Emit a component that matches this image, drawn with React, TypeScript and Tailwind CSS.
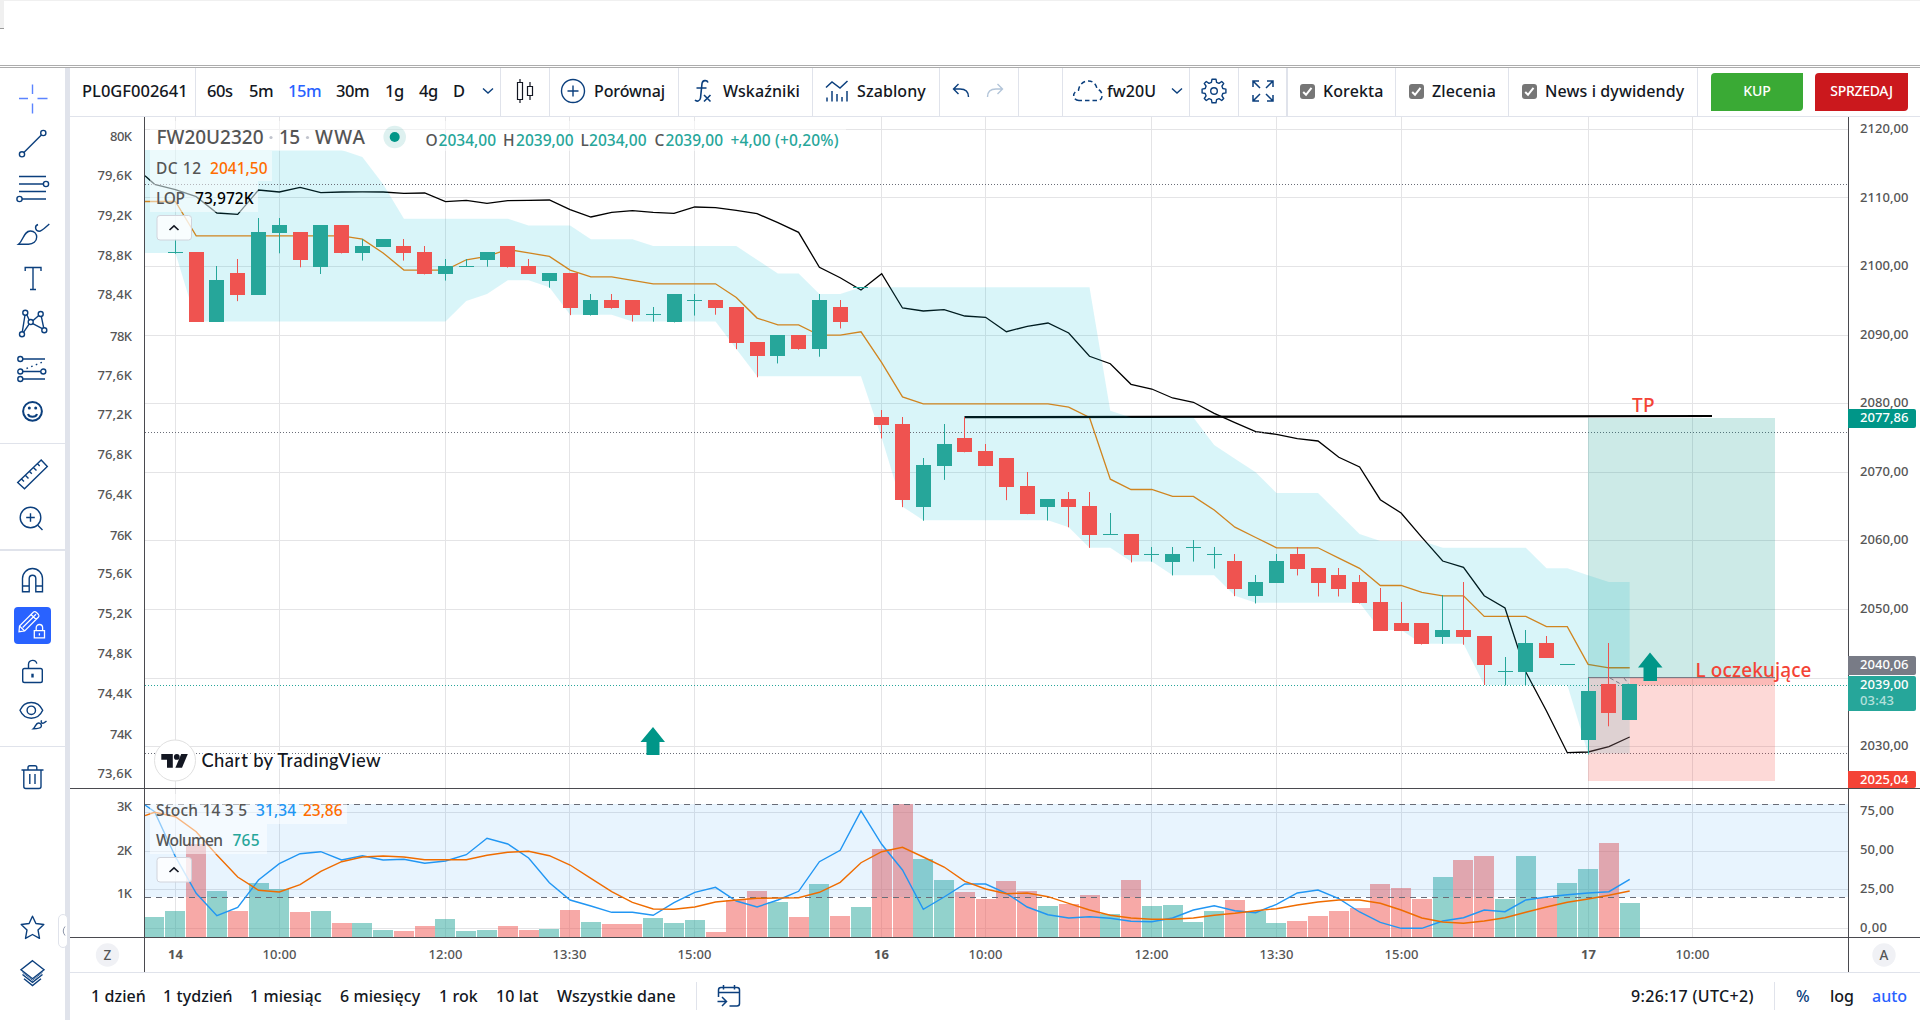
import type { ReactNode } from 'react';

type Candle = [open: number, close: number, high: number, low: number];

const UP = '#26a69a';
const DOWN = '#ef5350';

// One entry per 15 minute bar: open, close, high, low
const candles: Candle[] = [
  [2102, 2102, 2104, 2102], [2102, 2092, 2102, 2092], [2092, 2098, 2100, 2092], [2099, 2096, 2101, 2095],
  [2096, 2105, 2107, 2096], [2105, 2106, 2107, 2102], [2105, 2101, 2105, 2100], [2100, 2106, 2106, 2099],
  [2106, 2102, 2106, 2102], [2102, 2103, 2104, 2101], [2103, 2104, 2104, 2103], [2103, 2102, 2104, 2101],
  [2102, 2099, 2103, 2099], [2099, 2100, 2101, 2098], [2100, 2100, 2101, 2100], [2101, 2102, 2102, 2100],
  [2103, 2100, 2103, 2100], [2100, 2099, 2101, 2099], [2098, 2099, 2099, 2097], [2099, 2094, 2099, 2093],
  [2093, 2095, 2096, 2093], [2095, 2094, 2096, 2094], [2095, 2093, 2095, 2092], [2093, 2093, 2094, 2092],
  [2092, 2096, 2096, 2092], [2095, 2095, 2096, 2093], [2095, 2094, 2095, 2093], [2094, 2089, 2094, 2088],
  [2089, 2087, 2089, 2084], [2087, 2090, 2090, 2086], [2090, 2088, 2090, 2088], [2088, 2095, 2096, 2087],
  [2094, 2092, 2095, 2091], [2097, 2097, 2097, 2097], [2078, 2077, 2079, 2075], [2077, 2066, 2078, 2065],
  [2065, 2071, 2072, 2063], [2071, 2074, 2077, 2069], [2075, 2073, 2078, 2073], [2073, 2071, 2074, 2071],
  [2072, 2068, 2072, 2066], [2068, 2064, 2070, 2064], [2065, 2066, 2066, 2063], [2066, 2065, 2067, 2062],
  [2065, 2061, 2067, 2059], [2061, 2061, 2064, 2061], [2061, 2058, 2061, 2057], [2058, 2058, 2059, 2057],
  [2057, 2058, 2059, 2055], [2059, 2059, 2060, 2057], [2058, 2058, 2059, 2056], [2057, 2053, 2058, 2052],
  [2052, 2054, 2055, 2051], [2054, 2057, 2058, 2054], [2058, 2056, 2059, 2055], [2056, 2054, 2056, 2052],
  [2055, 2053, 2056, 2052], [2054, 2051, 2055, 2051], [2051, 2047, 2053, 2047], [2048, 2047, 2051, 2047],
  [2048, 2045, 2048, 2045], [2046, 2047, 2052, 2045], [2047, 2046, 2054, 2045], [2046, 2042, 2046, 2039],
  [2041, 2041, 2043, 2039], [2041, 2045, 2047, 2039], [2045, 2043, 2046, 2043], [2042, 2042, 2042, 2042],
  [2031, 2038, 2040, 2029], [2039, 2035, 2045, 2033], [2034, 2039, 2039, 2034],
];

// Donchian channel, starting one bar before the first candle
const dcUpper = [
  2117, 2117, 2117, 2117, 2117, 2117, 2117, 2117, 2117, 2117, 2116, 2112, 2107, 2107, 2107, 2107, 2107, 2107,
  2106, 2106, 2106, 2104, 2104, 2104, 2103, 2103, 2103, 2103, 2103, 2101, 2099, 2099, 2096, 2096,
  2097, 2097, 2097, 2097, 2097, 2097, 2097, 2097, 2097, 2097, 2097, 2097, 2079, 2078, 2078, 2078, 2078,
  2074, 2072, 2070, 2067, 2067, 2067, 2064, 2061, 2060, 2060, 2060, 2059, 2059, 2059, 2059, 2059,
  2056, 2056, 2055, 2054, 2054,
];
const dcLower = [
  2102, 2102, 2092, 2092, 2092, 2092, 2092, 2092, 2092, 2092, 2092, 2092, 2092, 2092, 2092, 2095, 2096, 2098,
  2098, 2097, 2093, 2093, 2093, 2092, 2092, 2092, 2092, 2092, 2088, 2084, 2084, 2084, 2084, 2084,
  2084, 2075, 2065, 2063, 2063, 2063, 2063, 2063, 2063, 2063, 2062, 2059, 2059, 2057, 2057, 2055, 2055,
  2055, 2052, 2051, 2051, 2051, 2051, 2051, 2051, 2047, 2047, 2045, 2045, 2045, 2039, 2039, 2039,
  2039, 2039, 2029, 2029, 2029,
];

// Open interest line, pixel rows per bar
const lop = [
  184.3, 189.7, 196.7, 213, 214.3, 190, 192, 187.3, 192.7, 192, 191.8, 192, 193.3, 193, 201.7, 200.3, 203.3,
  200.7, 200.3, 200, 209.7, 217, 212.3, 210.7, 212.3, 213.3, 207, 207.7, 210.3, 213.7, 222.7, 232.3,
  267.3, 277.7, 290, 273.7, 308, 311, 309.7, 316, 317.3, 331.7, 326.3, 323, 333, 356.3, 363.7, 384.3,
  389, 398, 402.3, 413.3, 422.7, 431.7, 434.3, 438.7, 441, 457.3, 467, 499.7, 513, 537.3, 561, 567.3,
  595.7, 608, 672, 711, 752.7, 752, 746.7, 737,
];

const stochK = [
  811.7, 856.7, 893.3, 915.7, 907.3, 880, 863.7, 853.7, 851.7, 860, 855.7, 860, 859.3, 863.3, 861, 854.7,
  838.3, 844, 858, 882.7, 900, 906, 912.3, 912.3, 915.3, 902.7, 892.3, 887.3, 901, 907, 900, 891.3, 861.7,
  850.3, 811, 844.3, 870, 909.3, 897, 884, 884, 893.3, 907, 914.7, 918, 916.7, 918.3, 921.3, 921.7, 918,
  910, 905.7, 910.7, 912.7, 904.3, 893, 890, 898.7, 912, 922.3, 928.3, 928.3, 921, 917.7, 910, 911.7, 900,
  897, 894.7, 893, 891.7, 879.3,
];
const stochD = [
  812.3, 816.7, 831.7, 855, 877, 890.3, 892, 884.7, 871.3, 861.7, 857, 856, 857, 859.7, 859.7, 859.7, 855.3,
  852.3, 851.3, 855.7, 865, 878.3, 891.7, 902.3, 909, 909.3, 907, 902, 900, 898.3, 898, 897.7, 892.3,
  882.3, 862.7, 851.7, 847.3, 857, 867, 881.3, 889, 893.7, 893, 896.7, 903.3, 910, 915.3, 918, 919.3,
  919.3, 918, 915.3, 913.3, 910.7, 908.7, 905, 902, 900, 900, 903.3, 910, 918, 922, 923.3, 921, 917.7,
  912.3, 907, 902.3, 899, 895.3, 891,
];

// Top edge of each volume bar, starting one bar before the first candle
const volume = [
  917, 911, 844, 891, 911, 883, 889, 912, 911, 923, 923, 930, 931, 926, 919, 931, 930, 926, 930, 929, 910,
  922, 924, 924, 918, 923, 920, 932, 900, 891, 902, 917, 884, 916, 907, 849, 804, 859, 880, 892, 899, 881,
  891, 906, 904, 895, 914, 880, 906, 905, 922, 911, 900, 911, 923, 921, 916, 911, 908, 884, 888, 899, 877,
  860, 856, 899, 856, 898, 883, 869, 843, 903,
];

const barX = (i: number) => 175.4 + i * 20.775;
const priceY = (p: number) => 129.5 + (2120 - p) * 6.857;
const barColor = (candle?: Candle) => (candle && candle[1] < candle[0] ? DOWN : UP);

const linePath = (rows: number[], startY: number) =>
  `M145 ${startY}` + rows.map((y, i) => `L${barX(i - 1).toFixed(1)} ${y}`).join('');

const channelPath =
  'M145 ' + priceY(2117) +
  dcUpper.map((p, i) => `L${barX(i - 1)} ${priceY(p)}`).join('') +
  [...dcLower].reverse().map((p, i) => `L${barX(dcLower.length - 2 - i)} ${priceY(p)}`).join('') +
  `L145 ${priceY(2102)}Z`;

const basis = dcUpper.map((p, i) => priceY((p + dcLower[i]) / 2));

const leftLabels: [string, number][] = [
  ['80K', 141], ['79,6K', 179.5], ['79,2K', 219.5], ['78,8K', 259.5], ['78,4K', 299], ['78K', 340.5],
  ['77,6K', 379.5], ['77,2K', 419], ['76,8K', 459], ['76,4K', 499], ['76K', 540], ['75,6K', 578], ['75,2K', 618],
  ['74,8K', 658], ['74,4K', 698], ['74K', 739], ['73,6K', 778], ['3K', 811], ['2K', 854.5], ['1K', 897.5],
];
const rightLabels: [string, number][] = [
  ['2120,00', 133], ['2110,00', 202], ['2100,00', 270], ['2090,00', 338.5], ['2080,00', 406.5],
  ['2070,00', 475.5], ['2060,00', 543.5], ['2050,00', 612.5], ['2030,00', 749.5], ['75,00', 814.5],
  ['50,00', 853.5], ['25,00', 892.5], ['0,00', 931.5],
];
const times: [string, number][] = [
  ['14', 175.5], ['10:00', 279.5], ['12:00', 445.5], ['13:30', 569.5], ['15:00', 694.5], ['16', 881.5],
  ['10:00', 985.5], ['12:00', 1151.5], ['13:30', 1276.5], ['15:00', 1401.5], ['17', 1588.5], ['10:00', 1692.5],
];

function T({
  x, y, w, size = 13, fill = '#555', bold, children,
}: {
  x: number; y: number; w: number; size?: number; fill?: string; bold?: boolean; children: string;
}) {
  return (
    <text x={x} y={y} textLength={w} fontSize={size} fill={fill} fontWeight={bold ? 700 : 500}>
      {children}
    </text>
  );
}

const labelWidth = (s: string) => ({ 2: 15, 3: 22, 4: 27, 5: s.includes('K') ? 34.5 : 34, 7: 48.5 })[s.length] ?? 34;

function Badge({ y, h, fill, label }: { y: number; h: number; fill: string; label: string }) {
  return (
    <>
      <path d={`M1848 ${y}h66a2 2 0 0 1 2 2v${h - 4}a2 2 0 0 1 -2 2h-66z`} fill={fill} />
      <T x={1860} y={y + 13.3} w={48.5} fill="#fff">{label}</T>
    </>
  );
}

function LegendToggle({ y }: { y: number }) {
  return (
    <g>
      <rect x="157" y={y} width="34.5" height="24.5" rx="3" fill="#fff" fillOpacity=".8" stroke="#d1d4dc" />
      <path d={`M169.5 ${y + 14.5}l4.5 -4.2l4.5 4.2`} fill="none" stroke="#131722" strokeWidth="1.6" />
    </g>
  );
}

function Chart() {
  return (
    <svg
      width="1850"
      height="856"
      viewBox="70 117 1850 856"
      className="block font-['Noto_Sans','Open_Sans',sans-serif]"
    >
      {/* grid */}
      <g stroke="#e4e4e6">
        {Array.from({ length: 10 }, (_, i) => (
          <path key={i} d={`M145 ${Math.floor(129.3 + i * 68.6) + 0.5}H1848`} />
        ))}
        {[812.5, 851.5, 889.5, 928.5].map((y) => (
          <path key={y} d={`M145 ${y}H1848`} />
        ))}
        {times.map(([, x]) => (
          <path key={x} d={`M${x} 117V937`} />
        ))}
      </g>

      {/* price pane */}
      <path d={linePath(basis, basis[0])} fill="none" stroke="#f57c00" strokeWidth="1.3" />
      <path d={linePath(lop, 175.7)} fill="none" stroke="#000" strokeWidth="1.3" />
      <path d="M964.5 417.2L1712 416" stroke="#000" strokeWidth="2.2" />
      <path d={channelPath} fill="#00bcd4" fillOpacity=".15" />
      <g fill="none" strokeDasharray="1 2">
        <path d="M145 184.5H1848M145 432.5H1848M145 753.5H1848" stroke="#6a6d78" />
        <path d="M145 685.5H1848" stroke="#26a69a" />
      </g>
      <rect x="1588" y="418" width="187" height="259.5" fill="#009688" fillOpacity=".2" />
      <rect x="1588" y="677.5" width="187" height="103.5" fill="#f44336" fillOpacity=".2" />
      <rect x="1630" y="677.5" width="145" height="8" fill="#f44336" fillOpacity=".2" />
      <path d="M1588 677.5H1775" stroke="#787b86" />
      <path d="M1610 678l16 9M1624 678l7 9" stroke="#787b86" strokeDasharray="4 3" />
      {candles.map((candle, i) => {
        const [open, close, high, low] = candle;
        const x = Math.floor(barX(i));
        const top = Math.floor(priceY(Math.max(open, close)));
        const bottom = Math.floor(priceY(Math.min(open, close))) + 1;
        return (
          <g key={i} fill={barColor(candle)}>
            <rect x={x} y={Math.floor(priceY(high))} width="1" height={priceY(low) - priceY(high) + 1} />
            <rect x={x - 7} y={top} width="15" height={bottom - top} />
          </g>
        );
      })}
      <g fill="#009688">
        <path d="M1650 652.5L1662.5 667.5H1657V681H1643.5V667.5H1638Z" />
        <path d="M653 727L665 742H659.5V755H646.5V742H640.5Z" />
      </g>
      <T x={1632} y={412} w={22.5} size={19} fill="#f44336">TP</T>
      <T x={1695.5} y={676.5} w={116} size={19} fill="#f44336">L oczekujące</T>

      {/* stochastic and volume pane */}
      {volume.map((y, i) => (
        <rect
          key={i}
          x={Math.max(145, Math.round(barX(i - 1) - 10))}
          y={y}
          width={i === 0 ? 19 : 20}
          height={937 - y}
          fill={barColor(candles[i - 1])}
          fillOpacity=".5"
        />
      ))}
      <rect x="145" y="804" width="1703" height="93" fill="#2196f3" fillOpacity=".1" />
      <path d="M145 804.5H1848M145 897.5H1848" stroke="#696c77" strokeDasharray="6 5" />
      <path d={linePath(stochK, 805)} fill="none" stroke="#2196f3" strokeWidth="1.4" />
      <path d={linePath(stochD, 815.7)} fill="none" stroke="#ef6c00" strokeWidth="1.4" />

      {/* pane borders */}
      <path d="M70 788.5H1920M70 937.5H1920M144.5 117V972M1848.5 117V972" stroke="#4a4a4f" fill="none" />
      <path d="M70 972.5H1920" stroke="#e0e3eb" />

      {/* legends */}
      <g fill="#fff" fillOpacity=".5">
        <path d="M150 121H846V151H272V181H258V212H150Z" />
        <path d="M150 794H347V824H267V854H150Z" />
      </g>
      <T x={156.5} y={143.7} w={107} size={19}>FW20U2320</T>
      <T x={279} y={143.7} w={21} size={19}>15</T>
      <T x={315} y={143.7} w={50} size={19}>WWA</T>
      <g fill="#c1c4cd">
        <circle cx="271" cy="137.5" r="1.6" />
        <circle cx="307.5" cy="137.5" r="1.6" />
      </g>
      <circle cx="394.7" cy="137" r="11.3" fill="#009688" fillOpacity=".13" />
      <circle cx="394.7" cy="137" r="5" fill="#009688" />
      <T x={425.5} y={145.5} w={11.5} size={15.5}>O</T>
      <T x={438.5} y={145.5} w={57.5} size={15.5} fill={UP}>2034,00</T>
      <T x={503} y={145.5} w={12} size={15.5}>H</T>
      <T x={516} y={145.5} w={57.5} size={15.5} fill={UP}>2039,00</T>
      <T x={580.5} y={145.5} w={8.5} size={15.5}>L</T>
      <T x={589} y={145.5} w={57.5} size={15.5} fill={UP}>2034,00</T>
      <T x={654.5} y={145.5} w={10} size={15.5}>C</T>
      <T x={665.5} y={145.5} w={57.5} size={15.5} fill={UP}>2039,00</T>
      <T x={730.5} y={145.5} w={108} size={15.5} fill={UP}>+4,00 (+0,20%)</T>
      <T x={156} y={173.5} w={45} size={15.5}>DC 12</T>
      <T x={210} y={173.5} w={57.5} size={15.5} fill="#ff6d00">2041,50</T>
      <T x={156} y={203.5} w={29} size={15.5}>LOP</T>
      <T x={195} y={203.5} w={58.5} size={15.5} fill="#000">73,972K</T>
      <LegendToggle y={215.5} />
      <T x={156} y={815.5} w={91} size={15.5}>Stoch 14 3 5</T>
      <T x={256} y={815.5} w={40} size={15.5} fill="#2196f3">31,34</T>
      <T x={303} y={815.5} w={39.5} size={15.5} fill="#ff6d00">23,86</T>
      <T x={156} y={845.5} w={67} size={15.5}>Wolumen</T>
      <T x={232.5} y={845.5} w={27} size={15.5} fill={UP}>765</T>
      <LegendToggle y={857.5} />

      {/* attribution */}
      <circle cx="175" cy="760.5" r="20.5" fill="#fff" stroke="#e0e0e0" />
      <g fill="#131722">
        <path d="M161.3 754H172.8V767.7H167V759.7H161.3Z" />
        <circle cx="176.8" cy="756.9" r="2.9" />
        <path d="M181.2 754H187.8L182 767.7H175.4Z" />
      </g>
      <text
        x="201.5"
        y="766.7"
        textLength="179"
        fontSize="18.5"
        fill="#131722"
        stroke="#fff"
        strokeWidth="4"
        paintOrder="stroke"
        fontWeight="500"
        fontFamily="Lato, sans-serif"
      >
        Chart by TradingView
      </text>

      {/* scales */}
      {leftLabels.map(([s, y]) => (
        <T key={s} x={132 - labelWidth(s)} y={y} w={labelWidth(s)}>{s}</T>
      ))}
      {rightLabels.map(([s, y]) => (
        <T key={s} x={1860} y={y} w={labelWidth(s)}>{s}</T>
      ))}
      {times.map(([s, x]) => (
        <T key={x} x={x - labelWidth(s) / 2} y={959} w={labelWidth(s)} bold={s.length === 2}>{s}</T>
      ))}
      <Badge y={409} h={19} fill="#009688" label="2077,86" />
      <Badge y={656} h={19} fill="#787b86" label="2040,06" />
      <Badge y={676} h={35} fill="#26a69a" label="2039,00" />
      <T x={1860} y={705} w={34} fill="#b5e0dc">03:43</T>
      <Badge y={771} h={17} fill="#f44336" label="2025,04" />
      <circle cx="107.5" cy="955" r="11.7" fill="#f0f1f5" />
      <T x={103.5} y={959.5} w={8} size={13.5}>Z</T>
      <circle cx="1884" cy="955" r="11.7" fill="#f0f1f5" />
      <T x={1879.5} y={959.5} w={9} size={13.5}>A</T>
    </svg>
  );
}

function Tool({ children, active }: { children: ReactNode; active?: boolean }) {
  return (
    <button className="flex h-[45px] w-[65px] shrink-0 items-center justify-center">
      <svg
        width="45"
        height="45"
        viewBox="-22.5 -22.5 45 45"
        fill="none"
        stroke={active ? '#fff' : '#0b3f7d'}
        strokeWidth="1.4"
      >
        {children}
      </svg>
    </button>
  );
}

function Sidebar() {
  return (
    <aside className="relative flex w-[65px] shrink-0 flex-col bg-white">
      <div className="h-[375px] shrink-0 pt-2">
        <Tool>
          <path d="M-13.5 0H-4.5M5 0H15M0 -14V-4.5M0 5V15" stroke="#5b84ff" />
        </Tool>
        <Tool>
          <circle cx="-10.5" cy="10.8" r="2.6" />
          <circle cx="10.8" cy="-10.5" r="2.6" />
          <path d="M-8.6 8.9L8.9 -8.6" />
        </Tool>
        <Tool>
          <path d="M-13.5 -12H13.5M-13.5 -4.5H11M-13.5 3H13.5M-10.5 10.5H13.5" />
          <circle cx="13.5" cy="-4.5" r="2.6" />
          <circle cx="-13" cy="10.5" r="2.6" />
        </Tool>
        <Tool>
          <path d="M-14 10.8C-9 7 -9 -2.5 -2 -2.5C2 -2.5 4.2 0.5 4.2 3.5C4.2 8 0.5 10.8 -4 10.8Z" />
          <path d="M5.5 -9C1.5 -7.5 2.8 -2.2 6.8 -2.2C9 -2.2 10.5 -4 16.8 -9.5" />
        </Tool>
        <Tool>
          <path d="M-7.3 -7.5V-11H8.5V-7.5M0.5 -11V11M-2.5 11H3.5" />
        </Tool>
        <Tool>
          <path d="M-7.5 -8.5L-10.2 8.3M-5.8 -9L-3.3 -3.5M0.3 -2.8L6 -7.8M8.8 -7.2L11.2 4.4M-3.4 0.6L-8.8 8.6M0.3 0.1L9.8 5.2" />
          <circle cx="-7.2" cy="-10.8" r="2.5" />
          <circle cx="-10.5" cy="10.8" r="2.5" />
          <circle cx="-1.8" cy="-1.5" r="2.5" />
          <circle cx="8.2" cy="-9.5" r="2.5" />
          <circle cx="11.8" cy="6.8" r="2.5" />
        </Tool>
        <Tool>
          <circle cx="-12.2" cy="-9.5" r="2.5" />
          <circle cx="-12.2" cy="3" r="2.5" />
          <circle cx="10.8" cy="3" r="2.5" />
          <circle cx="-12.2" cy="10.5" r="2.5" />
          <path d="M-9.7 -9.5H12.5M-9.7 3H8.3M-9.7 10.5H12.5" />
          <path d="M-6 0L12 -7.2" strokeDasharray="1.6 3.4" />
        </Tool>
        <Tool>
          <g strokeWidth="2">
            <circle cx="0" cy="-2.2" r="9.4" />
            <path d="M-4.5 0.5C-3.5 4.2 3.5 4.2 4.5 0.5" />
          </g>
          <circle cx="-3.2" cy="-5.6" r="1.5" fill="#0b3f7d" stroke="none" />
          <circle cx="3.2" cy="-5.6" r="1.5" fill="#0b3f7d" stroke="none" />
        </Tool>
      </div>
      <div className="h-[106px] shrink-0 border-t border-[#e0e3eb] pt-2">
        <Tool>
          <path d="M8.7 -14.5L14.8 -8L-8 14.3L-14.8 8ZM-11 4.5L-8.5 7M-7.2 0.7L-4 4M-3.2 -3.3L-0.7 -0.8M0.8 -7.1L4 -3.9M4.8 -10.9L7.2 -8.5" />
        </Tool>
        <Tool>
          <circle cx="-2" cy="-2" r="10.3" />
          <path d="M-2 -6.3V2.3M-6.3 -2H2.3M5 5.5L10 10.5" />
        </Tool>
      </div>
      <div className="h-[197px] shrink-0 border-t-2 border-[#e0e3eb] pt-[7px]">
        <Tool>
          <path d="M-10 11.3V-2A10 10 0 0 1 10 -2V11.3H3.3V-2A3.3 3.3 0 0 0 -3.3 -2V11.3ZM-10 5.5H-3.3M3.3 5.5H10" />
        </Tool>
        <div className="relative">
          <div className="absolute top-1 left-[14px] h-[37px] w-[37px] rounded bg-[#2962ff]" />
          <div className="relative">
            <Tool active>
              <path d="M-13.5 6.2L-13 0.5L1 -13.5Q2.5 -14.5 4 -13L6 -11Q7 -9.7 6 -8.5L-7.8 5.5ZM-13 0.5L-7.8 5.5M-9.8 2L3.5 -11.2M-1.5 -11L3.7 -6" strokeWidth="1.2" />
              <path d="M1.8 5.2H12V12.3H1.8ZM3.7 5V2.2A3.2 3.2 0 0 1 10.1 2.2V5M6.9 7.8V10" strokeWidth="1.3" />
            </Tool>
          </div>
        </div>
        <Tool>
          <rect x="-9.8" y="-2" width="19.6" height="14" rx="1.8" />
          <path d="M-4 -2V-6.3A4.2 4.2 0 0 1 4.3 -6.8" />
          <path d="M0 3.2V7" strokeWidth="2.4" />
        </Tool>
        <Tool>
          <path d="M-12.5 -5.2C-8 -15.7 5.5 -15.7 10.2 -5.2C5.5 5.3 -8 5.3 -12.5 -5.2Z" />
          <circle cx="-1.2" cy="-5.2" r="4.2" />
          <path d="M0.8 13.2C3 11.5 3.3 7.5 6 7.5C8.5 7.5 9.5 10 8.5 11.5C7.5 13.2 5 13.2 0.8 13.2ZM9 4.8C8 7 9.5 8 11 7.6C12.5 7 13 6.4 14 5.6" />
        </Tool>
      </div>
      <div className="h-[135px] shrink-0 border-t border-[#e0e3eb] pt-2">
        <Tool>
          <path d="M-11 -7.5H11M-8.7 -7.5V9Q-8.7 11 -6.7 11H6.5Q8.5 11 8.5 9V-7.5M-4.5 -7.5V-10Q-4.5 -11.8 -2.7 -11.8H2.5Q4.3 -11.8 4.3 -10V-7.5M-2.7 -3.5V6.5M2.5 -3.5V6.5" />
        </Tool>
      </div>
      <div className="pt-6">
        <Tool>
          <path d="M0 -11.3L3.4 -4L11.3 -3L5.5 2.4L7 10.9L0 7L-7 10.9L-5.5 2.4L-11.3 -3L-3.4 -4Z" strokeLinejoin="round" />
        </Tool>
        <Tool>
          <path d="M0 -11.8L11.5 -2.8L0 6.2L-11.5 -2.8ZM-10 2L0 9.8L10 2M-8.5 6.2L0 13L8.5 6.2" />
          <path d="M-10 -0.2L0 7.8L10 -0.2" strokeWidth="0.8" />
        </Tool>
      </div>
      <div className="absolute top-[846px] left-[58px] z-10 flex h-[34px] w-[10px] items-center justify-center rounded-[5px] border border-[#e0e3eb] bg-white">
        <svg width="5" height="10" viewBox="0 0 5 10" fill="none" stroke="#8c95a8">
          <path d="M4 0.5Q0.5 5 4 9.5" />
        </svg>
      </div>
    </aside>
  );
}

const intervals: [string, string][] = [
  ['60s', 'w-[42px]'], ['5m', 'w-[39px]'], ['15m', 'w-[48px]'], ['30m', 'w-[49px]'], ['1g', 'w-[34px]'],
  ['4g', 'w-[34px]'], ['D', 'w-[29px]'],
];

function Chevron() {
  return (
    <svg width="12" height="8" viewBox="0 0 12 8" fill="none" stroke="#0b3f7d" strokeWidth="1.4">
      <path d="M1 1.5L6 6L11 1.5" />
    </svg>
  );
}

function Check({ label, className }: { label: string; className: string }) {
  return (
    <label className={`flex items-center gap-2 border-r border-[#e0e3eb] ${className}`}>
      <span className="flex h-[15px] w-[15px] shrink-0 items-center justify-center rounded-[3px] bg-[#767676]">
        <svg width="13" height="13" viewBox="0 0 13 13" fill="none" stroke="#fff" strokeWidth="2">
          <path d="M2.2 7L5 9.8L10.5 2.8" />
        </svg>
      </span>
      <span>{label}</span>
    </label>
  );
}

function Toolbar() {
  return (
    <header className="flex h-[49px] shrink-0 items-stretch border-b border-[#e0e3eb] text-base leading-none font-medium whitespace-nowrap *:pb-0.5">
      <div className="flex w-[126px] items-center border-r border-[#e0e3eb] pl-3 text-[16.5px]">PL0GF002641</div>
      <div className="flex w-[305px] items-center border-r border-[#e0e3eb] pl-[11px] text-[16.5px] tracking-[-0.5px]">
        {intervals.map(([name, width]) => (
          <span key={name} className={name === '15m' ? `${width} text-[#2962ff]` : width}>{name}</span>
        ))}
        <Chevron />
      </div>
      <div className="flex w-[49px] items-center justify-center border-r border-[#e0e3eb]">
        <svg width="20" height="26" viewBox="0 0 20 26" fill="none" stroke="#131722" strokeWidth="1.2">
          <path d="M2.5 4.5H7.5V21.5H2.5ZM5 1V4.5M5 21.5V25M12.5 8.5H17.5V17.5H12.5ZM15 4V8.5M15 17.5V22" />
        </svg>
      </div>
      <div className="flex w-[129px] items-center border-r border-[#e0e3eb] pl-[10px]">
        <svg width="26" height="26" viewBox="0 0 26 26" fill="none" stroke="#0b3f7d" strokeWidth="1.4">
          <circle cx="13" cy="13" r="11.5" />
          <path d="M13 7.5V18.5M7.5 13H18.5" />
        </svg>
        <span className="ml-2 tracking-[-0.1px]">Porównaj</span>
      </div>
      <div className="flex w-[134px] items-center border-r border-[#e0e3eb] pl-3">
        <svg width="24" height="24" viewBox="0 0 24 24" fill="none" stroke="#0b3f7d" strokeWidth="1.6">
          <path d="M17 3.5C16 0.8 11.5 0.8 11 4.5L9.5 19C9 22.5 5.5 22.8 4 21M5.5 9H15.5M13 16L19.5 22.5M19.5 16L13 22.5" />
        </svg>
        <span className="ml-2 tracking-[0.1px]">Wskaźniki</span>
      </div>
      <div className="flex w-[127px] items-center border-r border-[#e0e3eb] pl-3">
        <svg width="24" height="24" viewBox="0 0 24 24" fill="none" stroke="#0b3f7d" strokeWidth="1.5">
          <path d="M1 8.5L7 3L15 9L22.5 2M2 22.5V18.5M7 22.5V12M12 22.5V15M17 22.5V18M22 22.5V12" />
        </svg>
        <span className="ml-2 tracking-[0.1px]">Szablony</span>
      </div>
      <div className="flex w-[79px] items-center gap-4 border-r border-[#e0e3eb] pl-3">
        <svg width="18" height="16" viewBox="0 0 18 16" fill="none" stroke="#0b3f7d" strokeWidth="1.4">
          <path d="M6.5 1L1.5 6L6.5 11M1.5 6H8Q16.5 6 16.5 14" />
        </svg>
        <svg width="18" height="16" viewBox="0 0 18 16" fill="none" stroke="#b3c5d9" strokeWidth="1.4">
          <path d="M11.5 1L16.5 6L11.5 11M16.5 6H10Q1.5 6 1.5 14" />
        </svg>
      </div>
      <div className="w-[44px] border-r border-[#e0e3eb]" />
      <div className="flex w-[127px] items-center border-r border-[#e0e3eb] pl-[9px]">
        <svg width="32" height="24" viewBox="0 0 32 24" fill="none" stroke="#0b3f7d" strokeWidth="1.5">
          <path d="M7 21.5C0.5 21.5 -0.5 13 6.5 11.2C7.5 4.5 12 2 16.5 2C21.5 2 24.5 6 25 10C32 12 31.5 21.5 25.5 21.5Z" strokeDasharray="4.5 3" />
        </svg>
        <span className="ml-[3px] w-[64px] tracking-[0.1px]">fw20U</span>
        <Chevron />
      </div>
      <div className="flex w-[49px] items-center justify-center border-r border-[#e0e3eb]">
        <svg width="26" height="26" viewBox="0 0 26 26" fill="none" stroke="#0b3f7d" strokeWidth="1.4" strokeLinejoin="round">
          <path d="M11 1.2H15L15.6 4.3L18 5.3L20.7 3.5L22.7 5.5L20.9 8.1L21.8 10.5L24.9 11.1V14.9L21.8 15.5L20.9 17.9L22.7 20.5L20.7 22.5L18 20.7L15.6 21.7L15 24.8H11L10.4 21.7L8 20.7L5.3 22.5L3.3 20.5L5.1 17.9L4.2 15.5L1.1 14.9V11.1L4.2 10.5L5.1 8.1L3.3 5.5L5.3 3.5L8 5.3L10.4 4.3Z" />
          <circle cx="13" cy="13" r="3.3" />
        </svg>
      </div>
      <div className="flex w-[49px] items-center justify-center border-r-2 border-[#e0e3eb]">
        <svg width="22" height="22" viewBox="0 0 22 22" fill="none" stroke="#0b3f7d" strokeWidth="1.5">
          <path d="M1 7V1H7M1 1L8 8M15 1H21V7M21 1L14 8M1 15V21H7M1 21L8 14M15 21H21V15M21 21L14 14" />
        </svg>
      </div>
      <Check label="Korekta" className="w-[108px] pl-3 tracking-[0.1px]" />
      <Check label="Zlecenia" className="w-[113px] pl-[13px] tracking-[0.1px]" />
      <Check label="News i dywidendy" className="w-[189px] pl-[13px] tracking-[0.1px]" />
      <div className="flex items-start gap-3 pt-[5px] pl-[13px] text-sm text-white">
        <button className="h-[38px] w-[92px] rounded-tl rounded-br bg-[#3aaa35] pb-0.5">KUP</button>
        <button className="h-[38px] w-[93px] rounded-tl rounded-br bg-[#cb181d] pb-0.5 tracking-[-0.3px]">SPRZEDAJ</button>
      </div>
    </header>
  );
}

const ranges: [string, string][] = [
  ['1 dzień', 'w-[72px]'], ['1 tydzień', 'w-[87px]'], ['1 miesiąc', 'w-[90px]'], ['6 miesięcy', 'w-[99px]'],
  ['1 rok', 'w-[57px]'], ['10 lat', 'w-[61px]'], ['Wszystkie dane', 'w-[139px]'],
];

function Footer() {
  return (
    <footer className="flex h-[47px] shrink-0 items-center pb-px pl-[21px] text-base leading-none font-medium whitespace-nowrap">
      {ranges.map(([name, width]) => (
        <span key={name} className={`${width} pb-px tracking-[0.08px]`}>{name}</span>
      ))}
      <div className="h-7 w-px bg-[#e0e3eb]" />
      <svg width="24" height="24" viewBox="0 0 24 24" fill="none" stroke="#0b3f7d" strokeWidth="1.5" className="ml-5">
        <path d="M1.5 13V6Q1.5 3.5 4 3.5H20Q22.5 3.5 22.5 6V19.5Q22.5 22 20 22H12.5M1.5 8.5H22.5M6.5 1V5.5M17.5 1V5.5M0.5 17.5H9M5 13L9.5 17.5L5 22" />
      </svg>
      <span className="ml-auto w-[143px] pb-px tracking-[0.35px]">9:26:17 (UTC+2)</span>
      <div className="h-7 w-px bg-[#e0e3eb]" />
      <span className="ml-[21px] w-[34px] pb-px text-[#0b3f7d]">%</span>
      <span className="w-[42px] pb-px">log</span>
      <span className="w-[48px] pb-px text-[#2962ff]">auto</span>
    </footer>
  );
}

export default function App() {
  return (
    <div className="flex h-[1020px] w-[1920px] flex-col overflow-hidden bg-white font-['Noto_Sans','Open_Sans',sans-serif] text-[#131722]">
      <div className="h-[65px] shrink-0 border-t border-[#f0f0f0]">
        <div className="h-[28px] w-1 border-b border-[#9a9a9a] bg-[#f0f0f0]" />
      </div>
      <div className="h-[3px] shrink-0 border-y border-[#acacac]" />
      <div className="flex flex-1">
        <Sidebar />
        <div className="w-[5px] shrink-0 bg-[#e0e3eb]" />
        <main className="flex w-[1850px] flex-col">
          <Toolbar />
          <Chart />
          <Footer />
        </main>
      </div>
    </div>
  );
}
